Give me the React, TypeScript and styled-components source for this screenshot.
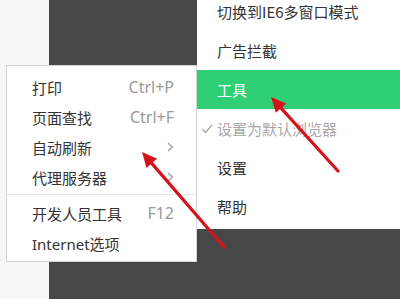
import React from "react";
import styled, { createGlobalStyle } from "styled-components";

const GlobalStyle = createGlobalStyle`
  html, body {
    margin: 0;
    padding: 0;
    background: #f7f7f7;
  }
  body {
    font-family: "Noto Sans", "Noto Sans CJK SC", sans-serif;
  }
`;

const Page = styled.div`
  position: relative;
  display: flex;
  width: 400px;
  height: 299px;
  overflow: hidden;
`;

const SideStrip = styled.div`
  width: 49px;
  background: #f7f7f7;
`;

const DarkArea = styled.div`
  flex: 1;
  display: flex;
  justify-content: flex-end;
  align-items: flex-start;
  background: #474747;
`;

const MainMenu = styled.ul`
  list-style: none;
  margin: 0;
  width: 203px;
  height: 237px;
  margin-top: -8px;
  padding: 0;
  background: #ffffff;
`;

const MainItem = styled.li<{ $active?: boolean; $disabled?: boolean }>`
  display: flex;
  align-items: center;
  height: 39px;
  padding-left: 20px;
  font-size: 15px;
  font-family: "Noto Sans CJK SC", sans-serif;
  color: ${(p) => (p.$active ? "#ffffff" : p.$disabled ? "#a8a8a8" : "#333333")};
  background: ${(p) => (p.$active ? "#2fcf76" : "transparent")};
  position: relative;
`;

const Check = styled.svg`
  position: absolute;
  left: 4px;
  top: 15px;
`;

const SubMenu = styled.ul`
  position: absolute;
  left: 6px;
  top: 65px;
  width: 189px;
  margin: 0;
  padding: 6px 0 3px;
  list-style: none;
  background: #ffffff;
  border: 1px solid #d4d4d4;
`;

const SubItem = styled.li`
  display: flex;
  align-items: center;
  justify-content: space-between;
  height: 30px;
  padding: 0 22px 0 25px;
  font-size: 15px;
  font-family: "Noto Sans CJK SC", sans-serif;
  color: #333333;
`;

const Label = styled.span`
  font-family: "Noto Sans", "Noto Sans CJK SC", sans-serif;
`;

const Shortcut = styled.span`
  color: #9a9a9a;
  font-family: "Noto Sans", sans-serif;
  font-size: 16px;
`;

const Separator = styled.li`
  height: 1px;
  margin: 2px 0 3px;
  background: #e6e6e6;
`;

const Overlay = styled.svg`
  position: absolute;
  left: 0;
  top: 0;
  pointer-events: none;
`;

const Chevron = () => (
  <svg width="7" height="10" viewBox="0 0 7 10">
    <polyline points="1,1 5.5,5 1,9" fill="none" stroke="#9a9a9a" strokeWidth="1.2" />
  </svg>
);

const Arrow = ({ x1, y1, x2, y2 }: { x1: number; y1: number; x2: number; y2: number }) => {
  const a = Math.atan2(y2 - y1, x2 - x1);
  const len = 15;
  const w = 7;
  const bx = x2 - len * Math.cos(a);
  const by = y2 - len * Math.sin(a);
  const px = -Math.sin(a) * w;
  const py = Math.cos(a) * w;
  return (
    <g>
      <line x1={x1} y1={y1} x2={bx} y2={by} stroke="#d3151b" strokeWidth="3.2" strokeLinecap="round" />
      <polygon
        points={`${x2},${y2} ${bx + px},${by + py} ${bx - px},${by - py}`}
        fill="#d3151b"
      />
    </g>
  );
};

export default function App() {
  return (
    <>
      <GlobalStyle />
      <Page>
        <SideStrip />
        <DarkArea>
          <MainMenu>
            <MainItem>切换到IE6多窗口模式</MainItem>
            <MainItem>广告拦截</MainItem>
            <MainItem $active>工具</MainItem>
            <MainItem $disabled>
              <Check width="12" height="10" viewBox="0 0 12 10">
                <polyline points="1,5 4.5,8.5 11,1" fill="none" stroke="#a8a8a8" strokeWidth="1.2" />
              </Check>
              设置为默认浏览器
            </MainItem>
            <MainItem>设置</MainItem>
            <MainItem>帮助</MainItem>
          </MainMenu>
        </DarkArea>
        <SubMenu>
          <SubItem>
            <Label>打印</Label>
            <Shortcut>Ctrl+P</Shortcut>
          </SubItem>
          <SubItem>
            <Label>页面查找</Label>
            <Shortcut>Ctrl+F</Shortcut>
          </SubItem>
          <SubItem>
            <Label>自动刷新</Label>
            <Chevron />
          </SubItem>
          <SubItem>
            <Label>代理服务器</Label>
            <Chevron />
          </SubItem>
          <Separator />
          <SubItem>
            <Label>开发人员工具</Label>
            <Shortcut>F12</Shortcut>
          </SubItem>
          <SubItem>
            <Label>Internet选项</Label>
          </SubItem>
        </SubMenu>
        <Overlay width="400" height="299" viewBox="0 0 400 299">
          <Arrow x1={224} y1={247} x2={142} y2={152} />
          <Arrow x1={338} y1={171} x2={271} y2={97} />
        </Overlay>
      </Page>
    </>
  );
}
